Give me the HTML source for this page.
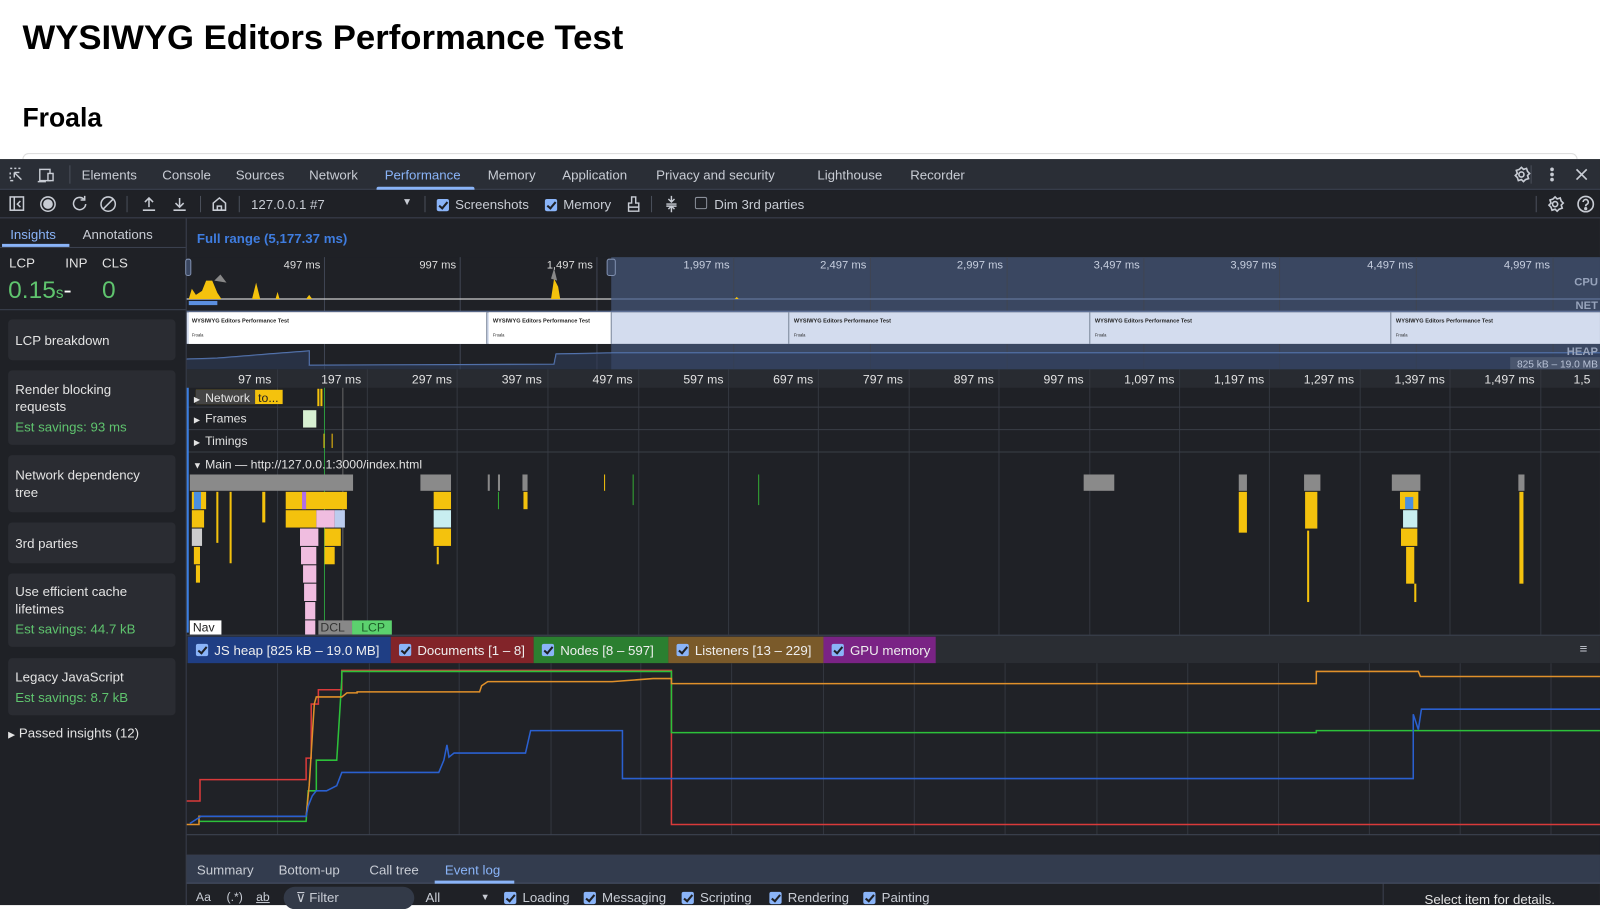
<!DOCTYPE html>
<html><head><meta charset="utf-8">
<style>
*{margin:0;padding:0;box-sizing:border-box}
html,body{width:1600px;height:905px;overflow:hidden;background:#fff;font-family:"Liberation Sans",Arial,sans-serif}
#w{position:absolute;left:0;top:0;width:1568px;height:887px;transform:scale(1.0204);transform-origin:0 0}
.a{position:absolute}
h1{position:absolute;left:22px;top:18px;font-size:34px;font-weight:700;color:#000}
h2{position:absolute;left:22px;top:100px;font-size:26px;font-weight:700;color:#000}
.t{color:#c8ccd4;font-size:13px;white-space:nowrap}
.card{position:absolute;left:8px;width:164px;background:#2a2c32;border-radius:4px;color:#e3e3e3;font-size:13px;padding:0 7px;display:flex;flex-direction:column;justify-content:center;line-height:17px}
.card .g{color:#5fc46e}
.cb{display:inline-block;width:12px;height:12px;border-radius:2px;background:#8ab4f8;vertical-align:-2px;margin-right:6px;position:relative}
.cb:after{content:"";position:absolute;left:4px;top:1px;width:3px;height:7px;border:solid #1f2126;border-width:0 2px 2px 0;transform:rotate(40deg)}
.lg{position:absolute;top:624px;height:26px;color:#eee;font-size:13px;display:flex;align-items:center;padding-left:8px;white-space:nowrap}
</style></head><body><div id="w">
<h1>WYSIWYG Editors Performance Test</h1>
<h2>Froala</h2>
<div class="a" style="left:22px;top:150px;width:1524px;height:6px;border:1px solid #ddd;border-bottom:none;border-radius:6px 6px 0 0"></div>

<div class="a" style="left:0;top:156px;width:1568px;height:731px;background:#1f2126"></div>
<div class="a" style="left:0;top:156px;width:1568px;height:30px;background:#2a2e36;border-bottom:1px solid #3c4250"></div>
<svg class="a" style="left:8px;top:163px" width="50" height="18" fill="none" stroke="#c8ccd4" stroke-width="1.4"><path d="M2 2h2M6 2h2M10 2h2M2 6v2M2 10v2M2 14h3M6 6l7 7M6 6h5M6 6v5"/><rect x="31" y="3" width="10" height="11"/><rect x="39" y="7" width="5" height="7" fill="#2a2e36"/><path d="M29 15h8"/></svg>
<div class="a" style="left:68px;top:162px;width:1px;height:18px;background:#4a4f5a"></div>
<div class="a t" style="left:80px;top:164px">Elements</div>
<div class="a t" style="left:159px;top:164px">Console</div>
<div class="a t" style="left:231px;top:164px">Sources</div>
<div class="a t" style="left:303px;top:164px">Network</div>
<div class="a t" style="left:377px;top:164px;color:#8ab4f8">Performance</div>
<div class="a" style="left:369px;top:183px;width:96px;height:3px;background:#8ab4f8;border-radius:2px 2px 0 0"></div>
<div class="a t" style="left:478px;top:164px">Memory</div>
<div class="a t" style="left:551px;top:164px">Application</div>
<div class="a t" style="left:643px;top:164px">Privacy and security</div>
<div class="a t" style="left:801px;top:164px">Lighthouse</div>
<div class="a t" style="left:892px;top:164px">Recorder</div>
<div class="a" style="left:1500px;top:162px;width:1px;height:18px;background:#4a4f5a"></div>
<svg class="a" style="left:1482px;top:162px" width="80" height="18" fill="none" stroke="#c8ccd4" stroke-width="1.6"><circle cx="9" cy="9" r="2.5"/><path d="M9 2l2 2 3-1 1 3 2 2-2 2 1 3-3 1-2 2-2-2-3 1-1-3-2-2 2-2-1-3 3-1z"/><circle cx="39" cy="4" r="1" fill="#c8ccd4"/><circle cx="39" cy="9" r="1" fill="#c8ccd4"/><circle cx="39" cy="14" r="1" fill="#c8ccd4"/><path d="M63 4l10 10M73 4l-10 10"/></svg>

<div class="a" style="left:0;top:187px;width:1568px;height:27px;background:#1f2126;border-bottom:1px solid #3c4250"></div>
<svg class="a" style="left:8px;top:191px" width="220" height="18" fill="none" stroke="#c8ccd4" stroke-width="1.5"><rect x="2" y="2" width="13" height="13"/><path d="M6 2v13M12 6l-3 3 3 3"/><circle cx="39" cy="9" r="7"/><circle cx="39" cy="9" r="4" fill="#c8ccd4"/><path d="M74 4a6 6 0 1 0 2 5M75 1v4h-4"/><circle cx="98" cy="9" r="7"/><path d="M93 14l10-10"/><path d="M138 3v9M134 7l4-4 4 4M132 15h12M168 3v9M164 8l4 4 4-4M162 15h12M201 15V8l6-5 6 5v7zM205 15v-4h4v4"/></svg>
<div class="a" style="left:124px;top:192px;width:1px;height:16px;background:#4a4f5a"></div>
<div class="a" style="left:196px;top:192px;width:1px;height:16px;background:#4a4f5a"></div>
<div class="a" style="left:234px;top:192px;width:1px;height:16px;background:#4a4f5a"></div>
<div class="a t" style="left:246px;top:193px">127.0.0.1 #7</div>
<div class="a t" style="left:394px;top:193px;font-size:10px">▼</div>
<div class="a" style="left:416px;top:192px;width:1px;height:16px;background:#4a4f5a"></div>
<div class="a t" style="left:428px;top:193px"><span class="cb"></span>Screenshots</div>
<div class="a t" style="left:534px;top:193px"><span class="cb"></span>Memory</div>
<svg class="a" style="left:613px;top:191px" width="70" height="18" fill="none" stroke="#c8ccd4" stroke-width="1.4"><path d="M6 2h4v6h3v8H3V8h3zM3 12h10M45 1v5M42 4l3 3 3-3M40 9h10M40 11h10M45 17v-5M42 14l3-3 3 3"/></svg>
<div class="a" style="left:638px;top:192px;width:1px;height:16px;background:#4a4f5a"></div>
<div class="a" style="left:681px;top:193px;width:12px;height:12px;border:1.5px solid #8a8f99;border-radius:2px"></div>
<div class="a t" style="left:700px;top:193px">Dim 3rd parties</div>
<div class="a" style="left:1505px;top:192px;width:1px;height:16px;background:#4a4f5a"></div>
<svg class="a" style="left:1515px;top:191px" width="50" height="18" fill="none" stroke="#c8ccd4" stroke-width="1.6"><circle cx="9" cy="9" r="2.5"/><path d="M9 2l2 2 3-1 1 3 2 2-2 2 1 3-3 1-2 2-2-2-3 1-1-3-2-2 2-2-1-3 3-1z"/><circle cx="39" cy="9" r="7.5"/><path d="M36.5 7a2.5 2.5 0 1 1 3.5 2.3c-1 .5-1 1-1 2"/><circle cx="39" cy="13.5" r=".8" fill="#c8ccd4"/></svg>

<div class="a" style="left:182px;top:214px;width:1px;height:673px;background:#3c4250"></div>
<div class="a t" style="left:10px;top:222px;color:#8ab4f8">Insights</div>
<div class="a" style="left:2px;top:239px;width:66px;height:3px;background:#8ab4f8"></div>
<div class="a t" style="left:81px;top:222px">Annotations</div>
<div class="a" style="left:0;top:242px;width:182px;height:1px;background:#3c4250"></div>
<div class="a t" style="left:9px;top:250px;color:#e3e3e3">LCP</div>
<div class="a t" style="left:64px;top:250px;color:#e3e3e3">INP</div>
<div class="a t" style="left:100px;top:250px;color:#e3e3e3">CLS</div>
<div class="a" style="left:8px;top:271px;font-size:24px;color:#5fc46e">0.15<span style="font-size:15px">s</span><span style="color:#fff">-</span></div>
<div class="a" style="left:100px;top:271px;font-size:24px;color:#5fc46e">0</div>
<div class="a" style="left:0;top:303px;width:182px;height:1px;background:#3c4250"></div>
<div class="card" style="top:313px;height:40px">LCP breakdown</div>
<div class="card" style="top:363px;height:73px"><div>Render blocking<br>requests</div><div class="g" style="margin-top:3px">Est savings: 93 ms</div></div>
<div class="card" style="top:446px;height:56px">Network dependency<br>tree</div>
<div class="card" style="top:512px;height:40px">3rd parties</div>
<div class="card" style="top:562px;height:72px"><div>Use efficient cache<br>lifetimes</div><div class="g" style="margin-top:3px">Est savings: 44.7 kB</div></div>
<div class="card" style="top:645px;height:56px"><div>Legacy JavaScript</div><div class="g" style="margin-top:3px">Est savings: 8.7 kB</div></div>
<div class="a t" style="left:8px;top:711px;color:#e3e3e3"><span style="font-size:9px">▶</span> Passed insights (12)</div>

<div class="a t" style="left:193px;top:226px;color:#3f7de0;font-weight:700;font-size:13px">Full range (5,177.37 ms)</div>
<div class="a" style="left:183px;top:252px;width:1385px;height:110px;background:#1f2126"></div>
<div class="a" style="left:599px;top:252px;width:969px;height:110px;background:#3a4761"></div>
<svg class="a" style="left:0;top:0" width="1568" height="887">
<g stroke="#3f4552" stroke-width="1">
<path d="M318 252v53M451 252v53M585 252v53M719 252v53M853 252v53M987 252v53M1121 252v53M1254 252v53M1388 252v53M1522 252v53"/>
<path d="M318 337v25M451 337v25M585 337v25M719 337v25M853 337v25M987 337v25M1121 337v25M1254 337v25M1388 337v25M1522 337v25"/>
</g>
<path d="M183 293H1568M183 305H1568" stroke="#6a7fa8" stroke-width="1"/>
<path d="M183 293H599" stroke="#ccc" stroke-width="1.2"/>
<rect x="185" y="295" width="28" height="4" fill="#5b8fe0"/>
<path d="M185 293l3-10 4 6 6-4 4-10 6 0 5 12 4 6zM247 293l4-16 4 16zM270 293l2-7 2 7zM300 293l3-4 3 4zM540 293l3-20 4 8 2 12zM720 293l2-2 2 2z" fill="#f4c20d"/>
<path d="M210 275l6-6 6 8zM540 273l3-10 3 12z" fill="#888"/>
<rect x="183" y="306" width="1385" height="31" fill="#d3dcee"/>
<rect x="185" y="306" width="292" height="31" fill="#fff"/>
<rect x="479" y="306" width="120" height="31" fill="#fff"/>
<path d="M477 306v31M599 306v31M773 306v31M1068 306v31M1363 306v31" fill="none" stroke="#7a8699"/>
<path d="M183 352l30-1 50-4 40-3 0 14 240-1 2-10 50-1H1568" fill="none" stroke="#5b7fc0" stroke-width="1.3"/>
<path d="M183 352l30-1 50-4 40-3 0 14 240-1 2-10 50-1H1568V362H183z" fill="#2e3c58" opacity=".6"/>
<rect x="182" y="254" width="5" height="16" rx="2" fill="#3a4761" stroke="#8090b0"/>
<rect x="595" y="254" width="8" height="16" rx="2" fill="#3a4761" stroke="#8090b0"/>
<g font-family="Liberation Sans" font-size="11" fill="#ddd" text-anchor="end">
<text x="314" y="263">497 ms</text><text x="447" y="263">997 ms</text><text x="581" y="263">1,497 ms</text>
<text x="715" y="263" fill="#c6cede">1,997 ms</text><text x="849" y="263" fill="#c6cede">2,497 ms</text><text x="983" y="263" fill="#c6cede">2,997 ms</text><text x="1117" y="263" fill="#c6cede">3,497 ms</text><text x="1251" y="263" fill="#c6cede">3,997 ms</text><text x="1385" y="263" fill="#c6cede">4,497 ms</text><text x="1519" y="263" fill="#c6cede">4,997 ms</text>
<text x="1566" y="280" fill="#97a3bb" font-weight="700">CPU</text><text x="1566" y="303" fill="#97a3bb" font-weight="700">NET</text><text x="1566" y="348" fill="#97a3bb" font-weight="700">HEAP</text>
</g>
<rect x="1480" y="350" width="88" height="12" fill="#4a566e"/>
<text x="1566" y="360" font-family="Liberation Sans" font-size="10" fill="#b8c2d6" text-anchor="end">825 kB – 19.0 MB</text>
<g font-family="Liberation Sans" font-size="5.5" font-weight="700" fill="#222"><text x="188" y="316">WYSIWYG Editors Performance Test</text><text x="483" y="316">WYSIWYG Editors Performance Test</text><text x="778" y="316">WYSIWYG Editors Performance Test</text><text x="1073" y="316">WYSIWYG Editors Performance Test</text><text x="1368" y="316">WYSIWYG Editors Performance Test</text>
<g font-size="4" font-weight="400"><text x="188" y="330">Froala</text><text x="483" y="330">Froala</text><text x="778" y="330">Froala</text><text x="1073" y="330">Froala</text><text x="1368" y="330">Froala</text></g></g>
</svg>

<div class="a" style="left:183px;top:362px;width:1385px;height:18px;background:#282b31"></div>
<svg class="a" style="left:0;top:0" width="1568" height="887">
<g stroke="#33373f" stroke-width="1"><path d="M272 362v260M360 362v260M448 362v260M537 362v260M626 362v260M714 362v260M802 362v260M891 362v260M979 362v260M1068 362v260M1156 362v260M1244 362v260M1333 362v260M1421 362v260M1510 362v260"/>
<path d="M183 399H1568M183 421H1568M183 443H1568" stroke="#3a3e47"/></g>
<g font-family="Liberation Sans" font-size="12" fill="#e3e3e3" text-anchor="end">
<text x="266" y="376">97 ms</text><text x="354" y="376">197 ms</text><text x="443" y="376">297 ms</text><text x="531" y="376">397 ms</text><text x="620" y="376">497 ms</text><text x="709" y="376">597 ms</text><text x="797" y="376">697 ms</text><text x="885" y="376">797 ms</text><text x="974" y="376">897 ms</text><text x="1062" y="376">997 ms</text><text x="1151" y="376">1,097 ms</text><text x="1239" y="376">1,197 ms</text><text x="1327" y="376">1,297 ms</text><text x="1416" y="376">1,397 ms</text><text x="1504" y="376">1,497 ms</text><text x="1542" y="376" text-anchor="start">1,5</text></g>
<path d="M184 380v240" stroke="#3b7ee0" stroke-width="2"/>
<path d="M318 380v240" stroke="#2c9a3e"/><path d="M336 380v240" stroke="#666"/>
<rect x="192" y="382" width="85" height="14" fill="#f4c20d"/><rect x="192" y="382" width="58" height="14" fill="#444"/>
<rect x="311" y="381" width="2" height="17" fill="#f4c20d"/><rect x="314" y="381" width="2" height="17" fill="#f4c20d"/>
<rect x="297" y="402" width="13" height="17" fill="#d7f0d2"/>
<rect x="317" y="425" width="1" height="14" fill="#f4c20d"/><rect x="325" y="425" width="1" height="14" fill="#f4c20d"/>
<g font-family="Liberation Sans" font-size="12" fill="#e3e3e3">
<text x="190" y="394" font-size="8">▶</text><text x="201" y="394">Network</text><text x="253" y="394" fill="#222">to...</text>
<text x="190" y="414" font-size="8">▶</text><text x="201" y="414">Frames</text>
<text x="190" y="436" font-size="8">▶</text><text x="201" y="436">Timings</text>
<text x="189" y="459" font-size="9">▼</text><text x="201" y="459">Main — http://127.0.0.1:3000/index.html</text></g>
<g>
<rect x="186" y="465" width="160" height="16" fill="#8a8a8a"/>
<rect x="188" y="482" width="14" height="17" fill="#f4c20d"/><rect x="190" y="482" width="7" height="17" fill="#4a8fe0"/>
<rect x="188" y="500" width="12" height="17" fill="#f4c20d"/><rect x="188" y="518" width="10" height="17" fill="#ccc"/><rect x="190" y="536" width="6" height="17" fill="#f4c20d"/><rect x="192" y="554" width="4" height="17" fill="#f4c20d"/>
<rect x="212" y="482" width="2" height="50" fill="#f4c20d"/><rect x="225" y="482" width="2" height="70" fill="#f4c20d"/><rect x="257" y="482" width="3" height="30" fill="#f4c20d"/>
<rect x="280" y="482" width="60" height="17" fill="#f4c20d"/><rect x="296" y="482" width="4" height="17" fill="#b06ee8"/>
<rect x="280" y="500" width="30" height="17" fill="#f4c20d"/><rect x="310" y="500" width="18" height="17" fill="#f0bde0"/><rect x="328" y="500" width="10" height="17" fill="#bce"/>
<rect x="294" y="518" width="18" height="17" fill="#f0bde0"/><rect x="318" y="518" width="16" height="17" fill="#f4c20d"/>
<rect x="295" y="536" width="15" height="17" fill="#f0bde0"/><rect x="318" y="536" width="10" height="17" fill="#f4c20d"/>
<rect x="297" y="554" width="13" height="17" fill="#f0bde0"/><rect x="298" y="572" width="12" height="17" fill="#f0bde0"/><rect x="299" y="590" width="10" height="17" fill="#f0bde0"/><rect x="299" y="608" width="10" height="14" fill="#f0bde0"/>
<rect x="412" y="465" width="30" height="16" fill="#8a8a8a"/><rect x="425" y="482" width="17" height="17" fill="#f4c20d"/><rect x="425" y="500" width="17" height="17" fill="#c8eef0"/><rect x="425" y="518" width="17" height="17" fill="#f4c20d"/><rect x="428" y="536" width="2" height="17" fill="#f4c20d"/>
<rect x="478" y="465" width="2" height="16" fill="#888"/><rect x="488" y="465" width="2" height="16" fill="#888"/><rect x="512" y="465" width="5" height="16" fill="#888"/><rect x="513" y="482" width="4" height="17" fill="#f4c20d"/><rect x="488" y="482" width="1" height="17" fill="#3a3"/>
<rect x="1062" y="465" width="30" height="16" fill="#8a8a8a"/><rect x="1214" y="465" width="8" height="16" fill="#8a8a8a"/><rect x="1214" y="482" width="8" height="40" fill="#f4c20d"/>
<rect x="1278" y="465" width="16" height="16" fill="#8a8a8a"/><rect x="1279" y="482" width="12" height="36" fill="#f4c20d"/><rect x="1281" y="520" width="2" height="70" fill="#f4c20d"/>
<rect x="1364" y="465" width="28" height="16" fill="#8a8a8a"/><rect x="1372" y="482" width="18" height="17" fill="#f4c20d"/><rect x="1377" y="487" width="8" height="12" fill="#4a8fe0"/><rect x="1375" y="500" width="14" height="17" fill="#c8eef0"/><rect x="1373" y="518" width="16" height="17" fill="#f4c20d"/><rect x="1378" y="536" width="8" height="36" fill="#f4c20d"/><rect x="1386" y="572" width="2" height="18" fill="#f4c20d"/>
<rect x="1488" y="465" width="6" height="16" fill="#8a8a8a"/><rect x="1489" y="482" width="4" height="90" fill="#f4c20d"/>
<rect x="592" y="465" width="1" height="16" fill="#f4c20d"/><rect x="620" y="465" width="1" height="30" fill="#3a3"/><rect x="743" y="465" width="1" height="30" fill="#3a3"/>
</g>
<rect x="186" y="608" width="31" height="14" fill="#fff"/><text x="189" y="619" font-family="Liberation Sans" font-size="12" fill="#222">Nav</text>
<rect x="312" y="608" width="33" height="14" fill="#888"/><text x="314" y="619" font-family="Liberation Sans" font-size="12" fill="#333">DCL</text>
<rect x="345" y="608" width="39" height="14" fill="#5cd16e"/><text x="354" y="619" font-family="Liberation Sans" font-size="12" fill="#1d5c28">LCP</text>
</svg>

<div class="a" style="left:183px;top:622px;width:1385px;height:28px;background:#2a2d33;border-top:1px solid #3c4250"></div>
<div class="lg" style="left:184px;width:199px;background:#1f3e84"><span class="cb"></span>JS heap [825 kB – 19.0 MB]</div>
<div class="lg" style="left:383px;width:140px;background:#822429"><span class="cb"></span>Documents [1 – 8]</div>
<div class="lg" style="left:523px;width:132px;background:#2b7f30"><span class="cb"></span>Nodes [8 – 597]</div>
<div class="lg" style="left:655px;width:152px;background:#7a5a2a"><span class="cb"></span>Listeners [13 – 229]</div>
<div class="lg" style="left:807px;width:110px;background:#7a2385"><span class="cb"></span>GPU memory</div>
<div class="a t" style="left:1548px;top:628px">≡</div>

<svg class="a" style="left:0;top:0" width="1568" height="887">
<rect x="183" y="650" width="1385" height="168" fill="#202227"/>
<g stroke="#33373f"><path d="M272 650v168M362 650v168M450 650v168M540 650v168M628 650v168M717 650v168M807 650v168M896 650v168M985 650v168M1075 650v168M1164 650v168M1253 650v168M1342 650v168M1431 650v168M1520 650v168"/></g>
<g fill="none" stroke-width="1.5">
<path stroke="#d93a3a" d="M183 785H196V764H300V743H305V690H312V676H335V657H658V808H1568"/>
<path stroke="#2cc13a" d="M195 805H300L302 775H310V745H330L335 665V658H658V718H1290V716H1568"/>
<path stroke="#e0902a" d="M183 808H195V800H300L303 770L308 690L310 683H335L340 679H350V678H470L472 672L478 668H600L640 665H658V670H1290V658H1390L1392 663H1568"/>
<path stroke="#2a60d0" d="M186 807L197 800H300L302 790L306 780L310 775H320L330 770L335 757H430L435 745L438 730L440 742L445 738H515L520 716H610V763H1385V700L1390 715L1393 695H1568"/>
</g>
<rect x="183" y="818" width="1385" height="20" fill="#1f2126"/>
<path d="M183 818H1568M183 838H1568" stroke="#3c4250"/>
</svg>

<div class="a" style="left:183px;top:838px;width:1385px;height:28px;background:#333c4e;border-bottom:1px solid #475064"></div>
<div class="a t" style="left:193px;top:845px">Summary</div>
<div class="a t" style="left:273px;top:845px">Bottom-up</div>
<div class="a t" style="left:362px;top:845px">Call tree</div>
<div class="a t" style="left:436px;top:845px;color:#8ab4f8">Event log</div>
<div class="a" style="left:426px;top:863px;width:78px;height:3px;background:#8ab4f8"></div>
<div class="a t" style="left:192px;top:872px;font-size:12px">Aa</div>
<div class="a t" style="left:222px;top:872px;font-size:12px">(.*)</div>
<div class="a t" style="left:251px;top:872px;font-size:12px;text-decoration:underline">ab</div>
<div class="a" style="left:278px;top:869px;width:128px;height:22px;border-radius:11px;background:#333a48"></div>
<div class="a t" style="left:290px;top:872px">⊽ Filter</div>
<div class="a t" style="left:417px;top:872px">All</div>
<div class="a t" style="left:471px;top:874px;font-size:9px">▼</div>
<div class="a t" style="left:494px;top:872px"><span class="cb"></span>Loading</div>
<div class="a t" style="left:572px;top:872px"><span class="cb"></span>Messaging</div>
<div class="a t" style="left:668px;top:872px"><span class="cb"></span>Scripting</div>
<div class="a t" style="left:754px;top:872px"><span class="cb"></span>Rendering</div>
<div class="a t" style="left:846px;top:872px"><span class="cb"></span>Painting</div>
<div class="a" style="left:1355px;top:866px;width:1px;height:21px;background:#3c4250"></div>
<div class="a t" style="left:1396px;top:874px;color:#e3e3e3">Select item for details.</div>
</div></body></html>
